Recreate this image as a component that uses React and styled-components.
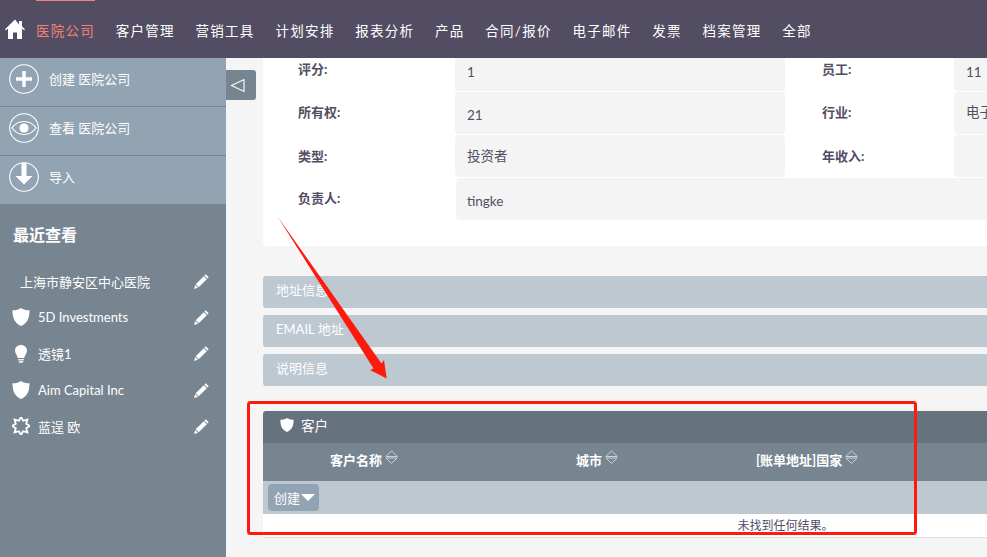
import React from "react";
import styled, { createGlobalStyle } from "styled-components";

const FONT = `Lato, "Noto Sans CJK SC", sans-serif`;

const Global = createGlobalStyle`
  html, body { margin: 0; padding: 0; width: 987px; height: 557px; overflow: hidden; background: #f5f5f5; }
  * { box-sizing: border-box; }
  body { font-family: ${FONT}; color: #534d64; }
`;

const Page = styled.div`
  position: relative;
  width: 987px;
  height: 557px;
  overflow: hidden;
  display: flex;
  flex-direction: column;
`;

const Nav = styled.nav`
  height: 58px;
  flex: none;
  background: #534d64;
  display: flex;
  align-items: center;
  padding: 4px 0 0 5px;
`;

const HomeLink = styled.a`
  display: flex;
  width: 20px;
  height: 20px;
  margin: -4px 11px 0 0;
`;

const NavItems = styled.div`
  display: flex;
  gap: 20.8px;
`;

const NavItem = styled.a`
  position: relative;
  font-size: 13.5px;
  letter-spacing: 1.25px;
  line-height: 20px;
  color: ${(p) => (p.$active ? "#ef8277" : "#ffffff")};
  white-space: nowrap;
  &::before {
    content: "";
    display: ${(p) => (p.$active ? "block" : "none")};
    position: absolute;
    left: 0;
    right: 0;
    top: -21px;
    height: 1px;
    background: #ef8277;
  }
`;

const Body = styled.div`
  flex: 1;
  display: flex;
  min-height: 0;
`;

const Sidebar = styled.aside`
  width: 226px;
  flex: none;
  background: #778591;
  color: #fff;
`;

const Action = styled.a`
  height: 49px;
  display: flex;
  align-items: flex-start;
  gap: 10px;
  padding: 6px 0 0 9px;
  background: #92a3b3;
  border-bottom: 1px solid #778591;
  font-size: 13px;
  line-height: 31px;
  &:last-child { border-bottom: 0; height: 48px; }
`;

const Recent = styled.div`
  padding: 20px 0 0 13px;
`;

const RecentTitle = styled.h2`
  margin: 0 0 17px;
  font-size: 16px;
  line-height: 22px;
  font-weight: 700;
`;

const RecentRow = styled.div`
  height: 36.3px;
  display: flex;
  align-items: center;
  font-size: 13px;
`;

const RowIcon = styled.span`
  width: 25px;
  flex: none;
  display: flex;
  justify-content: ${(p) => (p.$center ? "center" : "flex-start")};
  margin-left: -1px;
  padding-right: 7px;
`;

const RowName = styled.span`
  flex: 1;
  padding-left: ${(p) => (p.$plain ? "7px" : "0")};
  margin-left: ${(p) => (p.$plain ? "0" : "1px")};
`;

const EditIcon = styled.span`
  width: 15px;
  height: 15px;
  display: flex;
  margin-right: 17px;
`;

const Main = styled.main`
  position: relative;
  flex: 1;
  min-width: 0;
  padding-left: 37px;
  overflow: hidden;
`;

const Collapse = styled.button`
  position: absolute;
  left: 0;
  top: 12px;
  width: 30px;
  height: 30px;
  padding: 0 0 0 4px;
  border: 0;
  border-radius: 0 3px 3px 0;
  background: #778591;
  display: flex;
  align-items: center;
`;

const DetailCard = styled.section`
  width: 1038px;
  height: 188px;
  background: #fff;
  border-radius: 0 0 4px 4px;
  padding-left: 35px;
`;

const FieldGrid = styled.div`
  display: grid;
  grid-template-columns: 157px 330px 37px 132px 1fr;
  grid-template-rows: 34px 43px 43px 43px;
`;

const Label = styled.div`
  font-size: 13px;
  font-weight: 700;
  line-height: 20px;
  color: #534d64;
  grid-column: ${(p) => p.$col};
  padding-top: ${(p) => p.$top ?? 11}px;
`;

const Value = styled.div`
  font-size: 13.5px;
  line-height: 20px;
  background: #f4f4f4;
  border-radius: 0 0 4px 4px;
  margin-bottom: 1px;
  padding: ${(p) => p.$top ?? 11}px 0 0 ${(p) => p.$indent ?? 12}px;
  grid-column: ${(p) => p.$col};
  ${(p) => p.$rounded && "border-radius: 4px;"}
  ${(p) => p.$wide && "margin-left: 1px;"}
`;

const Collapsed = styled.div`
  width: 1038px;
  height: 32px;
  margin-bottom: 7px;
  padding-left: 13px;
  background: #bdc8d1;
  border-radius: 3px;
  color: #fff;
  font-size: 13px;
  line-height: 28px;
  &:first-of-type { margin-top: 30px; }
`;

const SubPanel = styled.section`
  width: 1038px;
  margin-top: 25px;
  background: #fff;
  border-radius: 3px 3px 0 0;
  box-shadow: 0 1px 1px rgba(0, 0, 0, 0.08);
`;

const SubHead = styled.div`
  height: 32px;
  padding: 0 0 4px 17px;
  display: flex;
  align-items: center;
  gap: 7px;
  background: #66727e;
  border-radius: 3px 3px 0 0;
  color: #fff;
  font-size: 13.5px;
`;

const TableHead = styled.div`
  height: 38px;
  display: grid;
  grid-template-columns: 313px 180px 1fr;
  background: #778591;
`;

const HeadCell = styled.div`
  display: flex;
  gap: 3px;
  padding: 7px 0 0 ${(p) => p.$indent || 0}px;
  color: #fff;
  font-size: 13px;
  font-weight: 700;
  line-height: 20px;
`;

const Toolbar = styled.div`
  height: 33px;
  padding: 3px 5px;
  background: #bdc8d1;
`;

const CreateButton = styled.button`
  width: 51px;
  height: 27px;
  padding: 0 0 0 6px;
  display: flex;
  align-items: center;
  gap: 1px;
  border: 0;
  border-radius: 4px;
  background: #92a3b3;
  color: #fff;
  font-family: ${FONT};
  font-size: 13px;
`;

const EmptyRow = styled.div`
  height: 23px;
  padding-left: 7px;
  text-align: center;
  font-size: 12px;
  line-height: 23px;
  color: #534d64;
`;

const Annotation = styled.svg`
  position: absolute;
  left: 0;
  top: 0;
  pointer-events: none;
`;

const HomeIcon = () => (
  <svg width="20" height="20" viewBox="0 0 20 20" fill="#fff">
    <path d="M10 .5 0 10.200l1 1L3 9.400V20h5v-6.500h4V20h5V9.400l2 1.800 1-1-3-2.900V2h-3v3.400z" />
  </svg>
);

const Circle = ({ children }) => (
  <svg width="30" height="30" viewBox="0 0 30 30" style={{ flex: "none" }}>
    <circle cx="15" cy="15" r="14.300" fill="none" stroke="#fff" strokeWidth="1.100" />
    {children}
  </svg>
);

const PlusIcon = () => (
  <Circle>
    <path d="M13.300 7h3.400v6.300H23v3.400h-6.300V23h-3.400v-6.300H7v-3.400h6.300z" fill="#fff" />
  </Circle>
);

const EyeIcon = () => (
  <Circle>
    <path d="M3 15c3-4.500 7-6.500 12-6.500S24 10.500 27 15c-3 4.500-7 6.500-12 6.500S6 19.500 3 15z" fill="none" stroke="#fff" strokeWidth="1.100" />
    <circle cx="15" cy="15" r="4.600" fill="#fff" />
  </Circle>
);

const DownIcon = () => (
  <Circle>
    <path d="M12.500 1h5v13h6L15 22.500 6.500 14h6z" fill="#fff" />
  </Circle>
);

const PencilIcon = () => (
  <svg width="15" height="15" viewBox="0 0 15 15" fill="#fff">
    <path d="M11.700.3 14.700 3.300 13.400 4.600 10.400 1.600z" />
    <path d="M9.800 2.200 12.800 5.200 4.700 13.300 1.700 10.300z" />
    <path d="M1.300 11 4 13.700 0 15z" />
  </svg>
);

const ShieldIcon = ({ size = 18 }) => (
  <svg width={size} height={size} viewBox="0 0 18 18" fill="#fff">
    <path d="M9 0c2 1.600 5 2.300 8.500 2.300 0 7-1.500 12.700-8.500 15.700C2 15 .5 9.300.5 2.300 4 2.300 7 1.600 9 0z" />
  </svg>
);

const BulbIcon = () => (
  <svg width="12" height="18" viewBox="0 0 12 18" fill="#fff">
    <path d="M6 0c3.300 0 6 2.400 6 5.500 0 3-2.200 4.300-2.800 7.500H2.800C2.200 9.800 0 8.500 0 5.500 0 2.400 2.700 0 6 0z" />
    <path d="M3 14h6v1.200H3zM3.400 15.800h5.200L7.500 18h-3z" opacity=".8" />
  </svg>
);

const BurstIcon = () => {
  const pts = [];
  for (let i = 0; i < 16; i++) {
    const r = i % 2 === 0 ? 9 : 5.600;
    const a = (Math.PI * i) / 8 - Math.PI / 2;
    pts.push(`${(9 + r * Math.cos(a)).toFixed(1)},${(9 + r * Math.sin(a)).toFixed(1)}`);
  }
  return (
    <svg width="18" height="18" viewBox="0 0 18 18">
      <polygon points={pts.join(" ")} fill="none" stroke="#fff" strokeWidth="1.800" />
    </svg>
  );
};

const SortIcon = () => (
  <svg width="13" height="14" viewBox="0 0 13 14" fill="none" stroke="#cbd2d8" strokeWidth="1" style={{ flex: "none" }}>
    <path d="M.8 6.500 6.500.8l5.700 5.700z" />
    <path d="M.8 8h11.400l-5.700 5.400z" />
  </svg>
);

const navItems = ["客户管理", "营销工具", "计划安排", "报表分析", "产品", "合同/报价", "电子邮件", "发票", "档案管理", "全部"];

const recent = [
  { name: "上海市静安区中心医院", plain: true },
  { name: "5D Investments", icon: <ShieldIcon /> },
  { name: "透镜1", icon: <BulbIcon />, center: true },
  { name: "Aim Capital Inc", icon: <ShieldIcon /> },
  { name: "蓝逞 欧", icon: <BurstIcon /> },
];

export default function App() {
  return (
    <Page>
      <Global />
      <Nav>
        <HomeLink>
          <HomeIcon />
        </HomeLink>
        <NavItems>
          <NavItem $active>医院公司</NavItem>
          {navItems.map((item) => (
            <NavItem key={item}>{item}</NavItem>
          ))}
        </NavItems>
      </Nav>
      <Body>
        <Sidebar>
          <div>
            <Action><PlusIcon />创建 医院公司</Action>
            <Action><EyeIcon />查看 医院公司</Action>
            <Action><DownIcon />导入</Action>
          </div>
          <Recent>
            <RecentTitle>最近查看</RecentTitle>
            {recent.map((row) => (
              <RecentRow key={row.name}>
                {!row.plain && <RowIcon $center={row.center}>{row.icon}</RowIcon>}
                <RowName $plain={row.plain}>{row.name}</RowName>
                <EditIcon><PencilIcon /></EditIcon>
              </RecentRow>
            ))}
          </Recent>
        </Sidebar>
        <Main>
          <Collapse aria-label="collapse">
            <svg width="15" height="15" viewBox="0 0 15 15" fill="none" stroke="#fff" strokeWidth="1.100">
              <path d="M14 1.500v12L1.500 7.500z" />
            </svg>
          </Collapse>
          <DetailCard>
            <FieldGrid>
              <Label $col="1" $top={1}>评分:</Label>
              <Value $col="2" $top={4}>1</Value>
              <Label $col="4" $top={1}>员工:</Label>
              <Value $col="5" $top={4}>11</Value>
              <Label $col="1" $top={10}>所有权:</Label>
              <Value $col="2" $rounded $top={13}>21</Value>
              <Label $col="4" $top={10}>行业:</Label>
              <Value $col="5" $rounded $top={10}>电子</Value>
              <Label $col="1">类型:</Label>
              <Value $col="2" $rounded>投资者</Value>
              <Label $col="4">年收入:</Label>
              <Value $col="5" $rounded />
              <Label $col="1" $top={10}>负责人:</Label>
              <Value $col="2 / 6" $rounded $wide $indent={11} $top={13}>tingke</Value>
            </FieldGrid>
          </DetailCard>
          <Collapsed>地址信息</Collapsed>
          <Collapsed>EMAIL 地址</Collapsed>
          <Collapsed>说明信息</Collapsed>
          <SubPanel>
            <SubHead>
              <ShieldIcon size={14} />
              客户
            </SubHead>
            <TableHead>
              <HeadCell $indent={67}>客户名称<SortIcon /></HeadCell>
              <HeadCell>城市<SortIcon /></HeadCell>
              <HeadCell>[账单地址]国家<SortIcon /></HeadCell>
            </TableHead>
            <Toolbar>
              <CreateButton>
                创建
                <svg width="14" height="7" viewBox="0 0 14 7" fill="#fff"><path d="M0 0h14L7 7z" /></svg>
              </CreateButton>
            </Toolbar>
            <EmptyRow>未找到任何结果。</EmptyRow>
          </SubPanel>
        </Main>
      </Body>
      <Annotation width="987" height="557" viewBox="0 0 987 557">
        <polygon points="277.700,216.700 381.500,363.500 384,360 386.700,378.500 370,370 373.500,368.500" fill="#ff1a0e" />
        <rect x="248.500" y="402.500" width="667" height="131" rx="2" fill="none" stroke="#ff1a0e" strokeWidth="3" />
      </Annotation>
    </Page>
  );
}
